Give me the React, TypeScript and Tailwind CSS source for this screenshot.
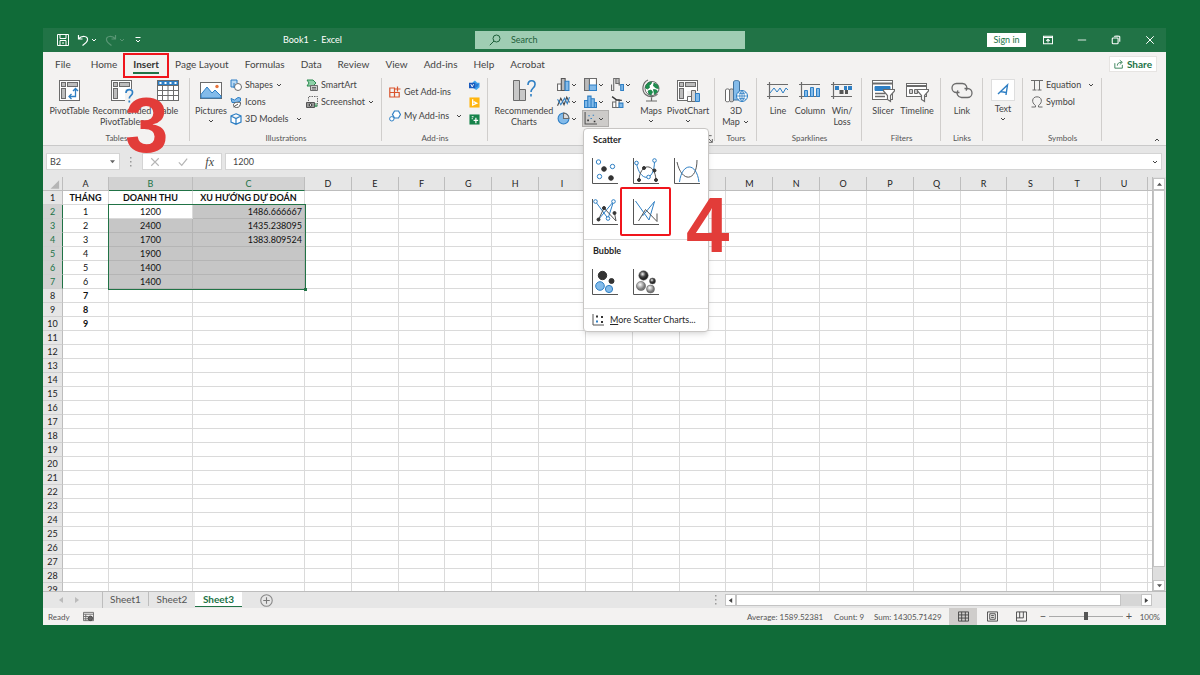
import { ReactNode } from 'react';
import clsx from 'clsx';

const G = '#6b6b6b';
const B = '#2e7fc4';
const LB = '#83bbea';

const Chevron = ({ className }: { className?: string }) => (
  <svg viewBox="0 0 8 8" className={clsx('h-2 w-2 shrink-0', className)} fill="none" stroke="currentColor" strokeWidth="1">
    <path d="M2 3 4 5 6 3" />
  </svg>
);

interface IconProps {
  size?: string;
  box?: string;
  children: ReactNode;
}

const Icon = ({ size = 'h-3 w-3', box = '0 0 12 12', children }: IconProps) => (
  <svg viewBox={box} className={clsx('shrink-0', size)} fill="none" stroke={G} strokeWidth="1" aria-hidden="true">
    {children}
  </svg>
);

const Big = ({ children }: { children: ReactNode }) => (
  <Icon size="h-6 w-6" box="0 0 24 24">
    {children}
  </Icon>
);

/* ---------- large ribbon icons ---------- */

const PivotFrame = () => (
  <>
    <rect x="1.5" y="1.5" width="20" height="20" fill="#fff" />
    <rect x="3.5" y="3.5" width="4" height="4" fill="#bdbdbd" />
    <rect x="9.5" y="3.5" width="10" height="4" fill="#bdbdbd" />
    <rect x="3.5" y="9.5" width="4" height="10" fill="#bdbdbd" />
  </>
);

const PivotTableIcon = () => (
  <Big>
    <PivotFrame />
    <path d="M17.5 10v7.5h-6M15 12l2.5-2.5L20 12M13.5 15 11 17.5l2.5 2.5" stroke={B} strokeWidth="1.3" />
  </Big>
);

const RecommendedPivotIcon = () => (
  <Big>
    <PivotFrame />
    <path d="M15 10h9v14h-9z" fill="#f3f2f1" stroke="none" />
    <path d="M16 14c0-4.5 7-4.5 6.5-.3 0 3-3.2 3-3.2 5.8M19.3 21.5v2" stroke={B} strokeWidth="1.7" />
  </Big>
);

const TableIcon = () => (
  <Big>
    <rect x="1.5" y="1.5" width="21" height="20" fill="#fff" />
    <path d="M2 2h20v4H2z" fill={B} stroke="none" />
    <path d="M3.5 4h2M8.5 4h2M13.5 4h2M18.5 4h2" stroke="#fff" strokeWidth="1.8" />
    <path d="M1.5 6.5h21M1.5 11.5h21M1.5 16.5h21M6.5 6.5v15M12 6.5v15M17.5 6.5v15" />
  </Big>
);

const PicturesIcon = () => (
  <Big>
    <rect x="1.5" y="3.5" width="21" height="16" fill="#fff" />
    <path d="M2 15.5 8 8l5 6 3-3 6 6v2H2z" fill={LB} stroke={B} />
    <circle cx="18" cy="7.5" r="1.7" fill="#e8743b" stroke="none" />
  </Big>
);

const RecommendedChartsIcon = () => (
  <Big>
    <path d="M1.5 1.5h6v20h-6zM7.5 10.5h6v11h-6z" fill="#c8c8c8" />
    <path d="M16 6c0-5.5 7.5-5.5 7-.5 0 3.5-4 3.5-4 7.5M19 15v2.5" stroke={B} strokeWidth="1.6" />
  </Big>
);

const MapsIcon = () => (
  <Big>
    <circle cx="13" cy="9.5" r="7" fill="#fff" />
    <path d="M7 6.5C8 4 11 3 12.5 3l-.5 2-2 1.5.5 2-2 1.5L6.5 9zM15 4l3.5 2 1 3.5-2.5-.5-2.5-2zM9 12l3-1 1.5 2-1.5 3-2-1zM14.5 10.5l3 .5 1 1.5-3 3z" fill="#1e9150" stroke="#187a42" strokeWidth="0.8" />
    <path d="M9 1C3 3.5 2.5 12 6.5 15.5c4 3.5 10 2.5 12-.5M12.500 18.500v3M7 22h11" strokeWidth="1.2" />
  </Big>
);

const PivotChartIcon = () => (
  <Big>
    <PivotFrame />
    <path d="M11 12h13v12H11z" fill="#f3f2f1" stroke="none" />
    <path d="M11.5 17.5h4v5h-4z" fill="#fff" />
    <path d="M15.5 11.5h4v11h-4z" fill="#d5d5d5" />
    <path d="M19.5 14.5h4v8h-4z" fill={LB} stroke={B} />
  </Big>
);

const MapIcon = () => (
  <Big>
    <path d="M1.5 11c0-1.5 4-1.5 4 0v11c0 1-4 1-4 0z" fill="#fff" />
    <path d="M5.5 11c0-1.5 4-1.5 4 0v11c0 1-4 1-4 0z" fill="#c8c8c8" />
    <path d="M9.5 3c0-2 6-2 6 0v18h-6z" fill={LB} stroke="#41719c" />
    <circle cx="18" cy="17" r="5.5" fill="#fff" stroke={B} />
    <path d="M12.5 17h11M18 11.5v11M14 13.5c2 1.500 6 1.500 8 0M14 20.500c2-1.500 6-1.500 8 0M18 11.500c-3 3-3 8 0 11 3-3 3-8 0-11" stroke={B} strokeWidth="0.8" />
  </Big>
);

const SparkFrame = () => <path d="M1 5.5h21M1 17.5h21M3.5 3v17" strokeWidth="1.2" />;

const LineIcon = () => (
  <Big>
    <SparkFrame />
    <path d="m4 14 4-5 3 4 3-4 3 5 3-5 2 2" stroke={B} />
  </Big>
);

const ColumnIcon = () => (
  <Big>
    <SparkFrame />
    <path d="M6.5 11.5h3v6h-3zM12.500 8.500h3v9h-3zM18.500 9.500h3v8h-3z" fill={LB} stroke={B} />
  </Big>
);

const WinLossIcon = () => (
  <Big>
    <SparkFrame />
    <path d="M5 7h4v4H5zM14 7h3v4h-3zM18 7h4v4h-4z" fill={B} stroke="none" />
    <path d="M9.5 11h4v4h-4zM15 11h3v4h-3z" fill="#555" stroke="none" />
  </Big>
);

const Funnel = () => (
  <path transform="translate(12 10)" d="M.5.5h11v1.5L7.500 6.500v6l-3-2v-4L.5 2z" fill="#fff" strokeWidth="1.2" />
);

const SlicerIcon = () => (
  <Big>
    <rect x="1.5" y="1.5" width="20" height="19" fill="#fff" />
    <path d="M1.5 4.5h20" strokeWidth="2" />
    <path d="M4 7.5h15v4H4z" fill={B} stroke={B} />
    <path d="M4 14.5h10M4 17.5h10" strokeWidth="1.5" />
    <Funnel />
  </Big>
);

const TimelineIcon = () => (
  <Big>
    <rect x="1.5" y="4.5" width="20" height="13" fill="#fff" />
    <path d="M1.5 7h20" strokeWidth="2" />
    <path d="M4.5 10.5h3v4h-3zM9.5 10.5h3v4h-3z" fill="#ccc" />
    <Funnel />
  </Big>
);

const LinkIcon = () => (
  <Big>
    <path d="M9.500 13.500H6.500a4.500 4.500 0 1 1 0-9h6a4.500 4.500 0 0 1 3.500 7.200" strokeWidth="1.3" />
    <path d="M14.500 9.500h3a4.500 4.500 0 1 1 0 9h-6a4.500 4.500 0 0 1-3.500-7.200" strokeWidth="1.3" />
  </Big>
);

/* ---------- small ribbon icons ---------- */

const ShapesIcon = () => (
  <Icon>
    <path d="M4 8H1V1h6v3" fill="#b9d9f3" stroke={B} />
    <circle cx="8" cy="8" r="3.5" fill="#fff" />
    <path d="M4 4v5" stroke={B} />
  </Icon>
);

const BirdIcon = () => (
  <Icon>
    <path d="M1 2.5 4.5 4 8 1.5 10.5 2v3L7 6.5H2z" fill={LB} stroke={B} />
    <path d="M3.5 8.5c1-3 5-2 7-2 0 3-1 5-4 5-2 0-3-1-3-3zM3.5 11 8 8" fill="#fff" stroke="#555" />
  </Icon>
);

const CubeIcon = () => (
  <Icon>
    <path d="M6 .8 11 3v6L6 11.3 1 9V3zM1 3l5 2.5L11 3M6 5.5v5.8" fill="#fff" stroke={B} strokeWidth="1.2" />
  </Icon>
);

const SmartArtIcon = () => (
  <Icon>
    <path d="M1 1h6l3 3-3 3H1l2-3z" fill="#8fd0a8" stroke="#2b8a4f" />
    <path d="M4.5 6.5h7v5h-7z" fill="#ccc" />
    <path d="M6 8.5h4M6 10h4" />
  </Icon>
);

const ScreenshotIcon = () => (
  <Icon>
    <path d="M2.5 5V.5h9V10" strokeDasharray="1.5 1" />
    <path d="M.5 6.5h8v5h-8z" fill="#999" stroke="#555" />
    <circle cx="4.5" cy="9" r="1.3" fill="#fff" stroke="#333" />
    <path d="M10 7v4M8.5 10h3" stroke="#2b8a4f" />
  </Icon>
);

const StoreIcon = () => (
  <Icon>
    <path d="M.8 2h4.7v4.5H.8zM.8 6.5h4.7V11H.8zM5.5 6.5h4.7V11H5.5zM8.5.5v5M6 3h5.5" stroke="#d9532c" strokeWidth="1.2" />
  </Icon>
);

const AddinHexIcon = () => (
  <Icon>
    <path d="M5.5 1h4L11.5 4.5 9.5 8h-4L3.5 4.5z" fill="#fff" stroke={B} strokeWidth="1.2" />
    <circle cx="2.8" cy="8.8" r="2.2" fill="#fff" stroke={B} />
  </Icon>
);

const VisioIcon = () => (
  <Icon size="h-[11px] w-[11px]">
    <path d="M4 2.5 6.5.5 9 3h2.5v5L8 11 4 8.5z" fill="#41a5ee" stroke="none" />
    <path d="M0 3h7v6H0z" fill="#185abd" stroke="none" />
    <path d="M7 4h4l-2 4H7z" fill="#2b7cd3" stroke="none" />
    <path d="m2 4.5 1.5 3L5 4.5" stroke="#fff" />
  </Icon>
);

const BingIcon = () => (
  <Icon size="h-[11px] w-[11px]">
    <path d="M.5.5h11v11H.5z" fill="#ffb60f" stroke="none" />
    <path d="M4 2.5v6.2l4.5-2L5 5" stroke="#fff" strokeWidth="1.4" />
  </Icon>
);

const PeopleGraphIcon = () => (
  <Icon size="h-[11px] w-[11px]">
    <path d="M.5.5h11v11H.5z" fill="#16834a" stroke="none" />
    <path d="M3 3h2M3 5h1M7.5 4v6M5 7h5" stroke="#fff" strokeWidth="1.3" />
  </Icon>
);

const chartIconSize = 'h-[13px] w-[13px]';

const ColChartIcon = () => (
  <Icon size={chartIconSize}>
    <path d="M.5 5.5h3.5v6H.5z" fill="#fff" />
    <path d="M4 .5h3.5v11H4z" fill="#bbb" stroke="#555" />
    <path d="M7.5 3h3.5v8.5H7.5z" fill={LB} stroke={B} />
  </Icon>
);

const LineChartIcon = () => (
  <Icon size={chartIconSize}>
    <path d="m.5 10 3-7 3 6L9 2l2.5 5" stroke="#444" />
    <path d="m.5 4 3 5L7 3l2.5 5 2-6" stroke={B} />
  </Icon>
);

const PieChartIcon = () => (
  <Icon size={chartIconSize}>
    <circle cx="6" cy="6" r="5" fill={LB} stroke={B} />
    <path d="M6 6V1a5 5 0 0 1 5 5z" fill="#ddd" />
  </Icon>
);

const TreemapIcon = () => (
  <Icon size={chartIconSize}>
    <path d="M.5.5h11v11H.5z" fill="#fff" />
    <path d="M.5.5H5v11H.5z" fill="#bbb" />
    <path d="M5 6.5h6.500v5H5z" fill={LB} stroke={B} />
  </Icon>
);

const HistogramIcon = () => (
  <Icon size={chartIconSize}>
    <path d="M.5 5h3v6.5h-3zM3.5 1h3v10.5h-3zM6.5 3.5h3v8h-3zM9.5 7h2v4.5h-2z" fill={LB} stroke={B} />
  </Icon>
);

const WaterfallIcon = () => (
  <Icon size={chartIconSize}>
    <path d="M.5 6v5.5h2V6M2.5 6V.5h2M7.500 4v2.500H9" />
    <path d="M4.5.5h3V5h-3z" fill="#bbb" />
    <path d="M9 6h2.5v5.5H9z" fill={LB} stroke={B} />
  </Icon>
);

const ComboIcon = () => (
  <Icon size={chartIconSize}>
    <path d="M1.5 6.5h3v5h-3zM4.5 4.5h3v7h-3z" fill="#fff" />
    <path d="M7.5 7.5h3.5v4H7.500z" fill={LB} stroke={B} />
    <path d="m1 1.5 4 3 5 .5" stroke="#333" strokeWidth="1.2" />
  </Icon>
);

const ScatterIcon = () => (
  <Icon size={chartIconSize}>
    <path d="M1 0v11h11" stroke="#555" />
    <path d="M3 7h1.5v1.5H3zM9 8h1.5v1.5H9z" fill="#333" stroke="none" />
    <path d="M4 3.5h1.3M8 3h1.3M6 6h1.3" stroke={B} />
  </Icon>
);

/* ---------- scatter gallery ---------- */

const Axes = () => <path d="M1.5 1v25.500H27" stroke="#555" />;

const Dots = ({ points, open }: { points: number[][]; open?: boolean }) => (
  <>
    {points.map(([x, y]) => (
      <circle key={`${x}-${y}`} cx={x} cy={y} r={open ? 1.8 : 1.5} fill={open ? '#fff' : '#333'} stroke={open ? B : '#333'} />
    ))}
  </>
);

const scatterTypes = [
  {
    name: 'Scatter',
    art: (
      <>
        <circle cx="7.5" cy="5" r="2.2" stroke={B} />
        <circle cx="21.5" cy="9.5" r="2.2" stroke={B} />
        <circle cx="8.5" cy="19.5" r="2.2" stroke={B} />
        <circle cx="13" cy="12" r="2.3" fill="#333" stroke="#333" />
        <circle cx="20" cy="21" r="2.3" fill="#333" stroke="#333" />
      </>
    ),
  },
  {
    name: 'Scatter with Smooth Lines and Markers',
    art: (
      <>
        <path d="M4.5 6c3 19 18 20 18-2" stroke={B} />
        <path d="M7 23C8 6 23 5 24 23" stroke="#555" />
        <Dots open points={[[4.5, 6], [16.5, 20], [22.5, 3.5]]} />
        <Dots points={[[7, 23], [12, 11], [22.5, 13.5], [24, 23]]} />
      </>
    ),
  },
  {
    name: 'Scatter with Smooth Lines',
    art: (
      <>
        <path d="M4 5c4.5 21 20 20 20-2" stroke="#555" />
        <path d="M6.5 25C9 5 23.500 5 26 25" stroke={B} />
      </>
    ),
  },
  {
    name: 'Scatter with Straight Lines and Markers',
    art: (
      <>
        <path d="M4.5 3.5 17 20.5l5.5-17L7.500 21.500" stroke={B} />
        <path d="m7.500 21.500 5.500-11.500 12 13-1.500-8" stroke="#555" />
        <Dots open points={[[4.5, 3.5], [22.5, 3.5], [17, 20.5]]} />
        <Dots points={[[7.5, 21.5], [13, 10], [23.5, 15]]} />
      </>
    ),
  },
  {
    name: 'Scatter with Straight Lines',
    art: (
      <>
        <path d="m3.5 3 13.500 19 5.500-18.500L10.500 18" stroke={B} />
        <path d="m6.5 23 7-11.500 11.500 12v-8" stroke="#555" />
      </>
    ),
  },
];

const GalleryArt = ({ children }: { children: ReactNode }) => (
  <Icon size="h-7 w-7" box="0 0 28 28">
    {children}
    <Axes />
  </Icon>
);

const ScatterMenu = () => (
  <div className="absolute top-full left-px z-20 mt-px w-[126px] rounded-sm border border-[#c8c6c4] bg-white text-[9px] text-[#262626] shadow-md">
    <h3 className="px-[9px] pt-1 pb-[3px] leading-[14px] font-bold">Scatter</h3>
    <div className="grid grid-cols-[41px_41px_41px]">
      {scatterTypes.map((type, i) => (
        <button key={type.name} aria-label={type.name} className="relative flex h-[41px] items-center justify-center">
          <GalleryArt>{type.art}</GalleryArt>
          {i === 4 && (
            <>
              <span className="absolute -inset-x-[5px] -inset-y-1 rounded-xs border-2 border-[#f0151c]" />
              <span className="absolute -top-[3px] left-[61px] font-['Liberation_Sans',sans-serif] text-[78px] leading-[75px] font-bold text-[#e23c39]">4</span>
            </>
          )}
        </button>
      ))}
    </div>
    <h3 className="mt-[7px] border-t border-[#dcdcdc] px-[9px] pt-1 pb-[3px] leading-[14px] font-bold">Bubble</h3>
    <div className="grid grid-cols-[41px_41px_41px]">
      <button aria-label="Bubble" className="flex h-[41px] items-center justify-center">
        <GalleryArt>
          <circle cx="11.5" cy="7.5" r="4.2" fill="#333" stroke="#333" />
          <circle cx="20.5" cy="13" r="2.5" fill="#333" stroke="#333" />
          <circle cx="9" cy="18" r="4.3" fill={LB} stroke={B} />
          <circle cx="18" cy="21" r="3.6" fill={LB} stroke={B} />
        </GalleryArt>
      </button>
      <button aria-label="3-D Bubble" className="flex h-[41px] items-center justify-center">
        <GalleryArt>
          <defs>
            <radialGradient id="dark" cx="40%" cy="35%">
              <stop offset="0" stopColor="#f5f5f5" />
              <stop offset="0.6" stopColor="#444" />
              <stop offset="1" stopColor="#222" />
            </radialGradient>
            <radialGradient id="light" cx="40%" cy="35%">
              <stop offset="0" stopColor="#fff" />
              <stop offset="1" stopColor="#777" />
            </radialGradient>
          </defs>
          <g stroke="#555" strokeWidth="0.5">
            <circle cx="11.5" cy="7.5" r="4.7" fill="url(#dark)" />
            <circle cx="20.5" cy="13" r="3" fill="url(#dark)" />
            <circle cx="9" cy="18" r="4.6" fill="url(#light)" />
            <circle cx="18.5" cy="21" r="4" fill="url(#light)" />
          </g>
        </GalleryArt>
      </button>
    </div>
    <button className="mt-[6px] flex h-[23px] w-full items-center gap-[6px] border-t border-[#dcdcdc] px-2">
      <Icon>
        <path d="M1 0v11h11" stroke="#555" />
        <path d="M4 1.5h2v2H4zM9 2h2v2H9zM9 7h2v2H9z" fill="#333" stroke="none" />
        <path d="M4 6.5h2v2H4z" fill={B} stroke="none" />
      </Icon>
      <span className="whitespace-nowrap"><u>M</u>ore Scatter Charts...</span>
    </button>
  </div>
);

/* ---------- ribbon building blocks ---------- */

interface GroupProps {
  label: string;
  width: string;
  className?: string;
  children: ReactNode;
}

const Group = ({ label, width, className, children }: GroupProps) => (
  <section className={clsx('relative flex shrink-0 flex-col', width)}>
    <div className={clsx('flex flex-1', className)}>{children}</div>
    <h2 className="h-3 text-center text-[8px] leading-[10px] text-[#555]">{label}</h2>
    <span className="absolute top-0.5 right-0 bottom-1 w-px bg-[#d0cecc]" />
  </section>
);

interface BigButtonProps {
  icon: ReactNode;
  lines: string[];
  width: string;
  menu?: boolean;
}

const BigButton = ({ icon, lines, width, menu }: BigButtonProps) => (
  <button className={clsx('flex shrink-0 flex-col items-center pt-[3px] leading-[11px] whitespace-nowrap', width)}>
    {icon}
    <span className="mt-0.5">{lines[0]}</span>
    {lines[1] && (
      <span className="flex items-center gap-0.5">
        {lines[1]}
        {menu && <Chevron />}
      </span>
    )}
    {menu && !lines[1] && <Chevron className="mt-px" />}
  </button>
);

interface SmallButtonProps {
  icon: ReactNode;
  label: string;
  menu?: boolean;
  wide?: boolean;
}

const SmallButton = ({ icon, label, menu, wide }: SmallButtonProps) => (
  <button className="flex h-[17px] items-center gap-[3px] whitespace-nowrap">
    {icon}
    <span>{label}</span>
    {menu && <Chevron className={wide ? 'ml-[3px]' : '-ml-px'} />}
  </button>
);

const chartButtons = [
  { name: 'Column', icon: <ColChartIcon /> },
  { name: 'Hierarchy', icon: <TreemapIcon /> },
  { name: 'Waterfall', icon: <WaterfallIcon /> },
  { name: 'Line', icon: <LineChartIcon /> },
  { name: 'Statistic', icon: <HistogramIcon /> },
  { name: 'Combo', icon: <ComboIcon /> },
  { name: 'Pie', icon: <PieChartIcon /> },
];

const Ribbon = () => (
  <div className="flex h-[69px] text-[9px] text-[#444]">
    <Group label="Tables" width="w-[147px]" className="pl-[5px]">
      <BigButton icon={<PivotTableIcon />} lines={['PivotTable']} width="w-[43px]" />
      <BigButton icon={<RecommendedPivotIcon />} lines={['Recommended', 'PivotTables']} width="w-[62px]" />
      <BigButton icon={<TableIcon />} lines={['Table']} width="w-[30px]" />
      <span className="absolute top-[12px] left-[82px] z-10 font-['Liberation_Sans',sans-serif] text-[78px] leading-[75px] font-bold text-[#e23c39]">3</span>
    </Group>
    <Group label="Illustrations" width="w-[192px]" className="gap-px pl-[3px]">
      <BigButton icon={<PicturesIcon />} lines={['Pictures']} width="w-[36px]" menu />
      <div className="w-[75px]">
        <SmallButton icon={<ShapesIcon />} label="Shapes" menu />
        <SmallButton icon={<BirdIcon />} label="Icons" />
        <SmallButton icon={<CubeIcon />} label="3D Models" menu wide />
      </div>
      <div>
        <SmallButton icon={<SmartArtIcon />} label="SmartArt" />
        <SmallButton icon={<ScreenshotIcon />} label="Screenshot" menu />
      </div>
    </Group>
    <Group label="Add-ins" width="w-[106px]" className="justify-between pr-2 pl-[7px]">
      <div className="flex flex-col gap-[7px] pt-[7px]">
        <SmallButton icon={<StoreIcon />} label="Get Add-ins" />
        <SmallButton icon={<AddinHexIcon />} label="My Add-ins" menu wide />
      </div>
      <div>
        {[<VisioIcon />, <BingIcon />, <PeopleGraphIcon />].map((icon, i) => (
          <button key={i} aria-label="Add-in" className="flex h-[17px] items-center pt-0.5">{icon}</button>
        ))}
      </div>
    </Group>
    <Group label="" width="w-[227px]" className="pl-[5px]">
      <BigButton icon={<RecommendedChartsIcon />} lines={['Recommended', 'Charts']} width="w-[62px]" />
      <div className="grid w-[81px] auto-rows-[17px] grid-cols-3">
        {chartButtons.map((chart) => (
          <button key={chart.name} aria-label={chart.name} className="flex items-center pl-0.5">
            {chart.icon}
            <Chevron />
          </button>
        ))}
        <div className="relative">
          <button aria-label="Scatter" className="flex h-[17px] w-full items-center border border-[#b0aeac] bg-[#cdcbc9] pl-px">
            <ScatterIcon />
            <Chevron />
          </button>
          <ScatterMenu />
        </div>
      </div>
      <BigButton icon={<MapsIcon />} lines={['Maps']} width="w-[30px]" menu />
      <BigButton icon={<PivotChartIcon />} lines={['PivotChart']} width="w-[44px]" menu />
      <button aria-label="Chart options" className="absolute right-0.5 bottom-0.5">
        <Icon size="h-2 w-2">
          <path d="M1 10V1h9M5 5l6 6M11 6v5H6" strokeWidth="1.5" />
        </Icon>
      </button>
    </Group>
    <Group label="Tours" width="w-[42px]" className="justify-center">
      <BigButton icon={<MapIcon />} lines={['3D', 'Map']} width="w-[36px]" menu />
    </Group>
    <Group label="Sparklines" width="w-[105px]" className="pl-[5px]">
      <BigButton icon={<LineIcon />} lines={['Line']} width="w-[32px]" />
      <BigButton icon={<ColumnIcon />} lines={['Column']} width="w-[32px]" />
      <BigButton icon={<WinLossIcon />} lines={['Win/', 'Loss']} width="w-[32px]" />
    </Group>
    <Group label="Filters" width="w-[79px]" className="pl-[5px]">
      <BigButton icon={<SlicerIcon />} lines={['Slicer']} width="w-[32px]" />
      <BigButton icon={<TimelineIcon />} lines={['Timeline']} width="w-[36px]" />
    </Group>
    <Group label="Links" width="w-[42px]" className="justify-center">
      <BigButton icon={<LinkIcon />} lines={['Link']} width="w-[36px]" />
    </Group>
    <Group label="" width="w-[40px]" className="justify-center">
      <BigButton
        icon={
          <span className="flex h-[22px] w-6 items-center justify-center border border-[#dedede] bg-white">
            <Icon size="h-4 w-4" box="0 0 16 16">
              <path d="M3 12 12.5 3 11 13M5.5 9.5 11 10.5" stroke={B} strokeWidth="1.4" />
            </Icon>
          </span>
        }
        lines={['Text']}
        width="w-[32px]"
        menu
      />
    </Group>
    <Group label="Symbols" width="w-[79px]" className="flex-col items-start pl-2">
      <SmallButton
        icon={
          <Icon>
            <path d="M0 1.5h12M3.5 1.5v9.5M1.5 11h4M8.5 1.5v9.5M6.5 11h4" />
          </Icon>
        }
        label="Equation"
        menu
        wide
      />
      <SmallButton
        icon={
          <Icon>
            <path d="M.5 11h4V9.5C0 6.5 1 .8 6 .8s6 5.7 1.500 8.700V11h4" />
          </Icon>
        }
        label="Symbol"
      />
    </Group>
    <div className="flex flex-1 items-end justify-end pr-[5px] pb-px">
      <button aria-label="Collapse the Ribbon">
        <Chevron className="rotate-180" />
      </button>
    </div>
  </div>
);

/* ---------- title bar and tabs ---------- */

const TitleBar = () => (
  <header className="flex h-6 items-center bg-[#217346] text-[9px] text-white">
    <div className="flex w-[240px] items-center pl-[14px]">
      <button aria-label="Save">
        <Icon size="h-3 w-3">
          <path d="M.5.5h11v11H.5zM3 .5v4h6v-4M3 11.5v-5h6v5M5 9h2" stroke="#fff" />
        </Icon>
      </button>
      <button aria-label="Undo" className="ml-2 flex items-center gap-px">
        <Icon>
          <path d="M1.5 1v4h4M1.5 5C5 1 11 2 10.5 6c-.3 2.5-3 4-5 5.5" stroke="#fff" strokeWidth="1.2" />
        </Icon>
        <Chevron />
      </button>
      <button aria-label="Redo" className="ml-[7px] flex items-center gap-px opacity-25">
        <Icon>
          <path d="M10.5 1v4h-4M10.5 5C7 1 1 2 1.5 6c.3 2.5 3 4 5 5.500" stroke="#fff" strokeWidth="1.2" />
        </Icon>
        <Chevron />
      </button>
      <button aria-label="Customize" className="ml-2">
        <Icon size="h-2 w-2" box="0 0 8 8">
          <path d="M1.5 1.5h5M2 4l2 2 2-2" stroke="#fff" />
        </Icon>
      </button>
    </div>
    <h1 className="w-[192px] whitespace-pre">Book1  -  Excel</h1>
    <label className="flex h-[18px] w-[270px] items-center gap-[10px] bg-[#9fcdb3] pl-[14px] text-[#1e5f3a]">
      <Icon>
        <circle cx="7.5" cy="4.5" r="3.5" stroke="#1e5f3a" />
        <path d="M5 7 .8 11.2" stroke="#1e5f3a" />
      </Icon>
      <input aria-label="Search" placeholder="Search" className="w-full bg-transparent outline-none placeholder:text-[#1e5f3a]" />
    </label>
    <div className="ml-auto flex items-center pr-[11px]">
      <button className="h-[14px] w-[39px] bg-white leading-[14px] text-[#217346]">Sign in</button>
      <button aria-label="Ribbon Display Options" className="ml-[17px]">
        <Icon size="h-[10px] w-[10px]">
          <path d="M.5 1.5h11v9H.5zM.5 3h11M6 9V5M4 7l2-2 2 2" stroke="#fff" strokeWidth="1.3" />
        </Icon>
      </button>
      <button aria-label="Minimize" className="ml-6">
        <Icon size="h-[10px] w-[10px]">
          <path d="M1 6h10" stroke="#fff" />
        </Icon>
      </button>
      <button aria-label="Restore" className="ml-6">
        <Icon size="h-[10px] w-[10px]">
          <rect x="1.5" y="3.5" width="7" height="7" rx="1" stroke="#fff" strokeWidth="1.3" />
          <path d="M4 2c0-1 6.5-1 6.5 0v6" stroke="#fff" strokeWidth="1.3" />
        </Icon>
      </button>
      <button aria-label="Close" className="ml-6">
        <Icon size="h-[10px] w-[10px]">
          <path d="m1.5 1.5 9 9M10.5 1.5l-9 9" stroke="#fff" strokeWidth="1.2" />
        </Icon>
      </button>
    </div>
  </header>
);

const tabs = ['File', 'Home', 'Insert', 'Page Layout', 'Formulas', 'Data', 'Review', 'View', 'Add-ins', 'Help', 'Acrobat'];

const TabRow = () => (
  <nav className="flex h-6 items-center gap-4 pr-[9px] pl-3 text-[10px] text-[#444]">
    {tabs.map((tab) => (
      <button key={tab} className={clsx('relative leading-4 whitespace-nowrap', tab === 'File' && 'mr-1', tab === 'Insert' && 'font-bold text-[#333]')}>
        {tab}
        {tab === 'Insert' && (
          <>
            <span className="absolute inset-x-0 -bottom-0.5 h-0.5 bg-[#217346]" />
            <span className="absolute -inset-x-[10px] -top-[3px] -bottom-[6px] z-10 border-2 border-[#f0151c]" />
          </>
        )}
      </button>
    ))}
    <button className="ml-auto flex h-4 items-center justify-center gap-[3px] border border-[#e6e4e2] bg-white px-1 font-bold text-[#217346]">
      <Icon size="h-[10px] w-[10px]">
        <path d="M1 5v6h9V7M4 8c0-3 2-4 5-4M7 1.5 10 4 7 6.5" stroke="#217346" />
      </Icon>
      Share
    </button>
  </nav>
);

const FormulaBar = () => (
  <div className="flex h-8 items-center gap-[3px] border-t border-[#c9c9c9] bg-[#e6e6e6] pr-1 pl-[3px] text-[9px] text-[#444]">
    <div className="flex h-[17px] w-[74px] items-center border border-[#d4d4d4] bg-white pr-1 pl-[3px]">
      <input aria-label="Name Box" defaultValue="B2" className="w-full outline-none" />
      <svg viewBox="0 0 6 6" className="h-[5px] w-[5px] shrink-0 fill-[#666]">
        <path d="M0 1.5h6L3 5z" />
      </svg>
    </div>
    <svg viewBox="0 0 16 10" className="h-[10px] w-4 shrink-0 fill-[#999]">
      <path d="M7 0h1.5v1.5H7zM7 4h1.5v1.5H7zM7 8h1.5v1.5H7z" />
    </svg>
    <div className="flex h-[17px] w-[80px] items-center justify-between border border-[#d4d4d4] bg-white px-[7px]">
      <button aria-label="Cancel">
        <Icon size="h-[10px] w-[10px]">
          <path d="m1.5 1.5 9 9M10.5 1.5l-9 9" stroke="#b5b5b5" strokeWidth="1.3" />
        </Icon>
      </button>
      <button aria-label="Enter">
        <Icon size="h-[10px] w-[10px]">
          <path d="m1 6.5 3.5 3.5L11 2" stroke="#b5b5b5" strokeWidth="1.5" />
        </Icon>
      </button>
      <button className="font-['Liberation_Serif',serif] text-[12px] leading-3 italic">fx</button>
    </div>
    <div className="flex h-[17px] flex-1 items-center border border-[#d4d4d4] bg-white px-[7px]">
      <input aria-label="Formula Bar" defaultValue="1200" className="w-full outline-none" />
      <Chevron className="-mr-[5px]" />
    </div>
  </div>
);

/* ---------- sheet ---------- */

const columns = 'ABCDEFGHIJKLMNOPQRSTU'.split('');

const data: Record<number, string[]> = {
  1: ['THÁNG', 'DOANH THU', 'XU HƯỚNG DỰ ĐOÁN'],
  2: ['1', '1200', '1486.666667'],
  3: ['2', '2400', '1435.238095'],
  4: ['3', '1700', '1383.809524'],
  5: ['4', '1900'],
  6: ['5', '1400'],
  7: ['6', '1400'],
  8: ['7'],
  9: ['8'],
  10: ['9'],
};

const isSelected = (row: number, col: number) => row >= 2 && row <= 7 && (col === 1 || col === 2);

const Sheet = () => (
  <div className="flex min-h-0 flex-1 bg-[#e6e6e6]">
    <div className="min-w-0 flex-1 overflow-hidden">
      <table className="w-full table-fixed border-separate border-spacing-0 text-[9px] text-[#111]">
        <colgroup>
          <col className="w-5" />
          <col className="w-[46px]" />
          <col className="w-[84px]" />
          <col className="w-[112px]" />
          {columns.slice(3).map((c) => (
            <col key={c} />
          ))}
          <col className="w-1" />
        </colgroup>
        <thead>
          <tr className="h-[14px]">
            <th className="border-r border-b border-[#bdbdbd] bg-[#e6e6e6] p-0">
              <svg viewBox="0 0 20 13" className="h-[13px] w-[19px] fill-[#b5b5b5]">
                <path d="M17 3v9H8z" />
              </svg>
            </th>
            {columns.map((c, i) => (
              <th
                key={c}
                className={clsx(
                  'h-[14px] border-r border-b p-0 leading-[13px] font-normal',
                  i === 1 || i === 2 ? 'border-r-[#bdbdbd] border-b-[#217346] bg-[#d2d2d2] text-[#217346]' : 'border-[#bdbdbd] bg-[#e6e6e6] text-[#222]',
                )}
              >
                {c}
              </th>
            ))}
            <th className="border-b border-[#bdbdbd] bg-[#e6e6e6] p-0" />
          </tr>
        </thead>
        <tbody>
          {Array.from({ length: 29 }, (_, i) => i + 1).map((row) => (
            <tr key={row} className="h-[14px]">
              <th
                className={clsx(
                  'h-[14px] border-r border-b border-b-[#cfcfcf] p-0 pt-px leading-3 font-normal',
                  row >= 2 && row <= 7 ? 'border-r-[#217346] bg-[#d2d2d2] text-[#217346]' : 'border-r-[#bdbdbd] bg-[#e6e6e6] text-[#222]',
                )}
              >
                {row}
              </th>
              {columns.map((c, col) => (
                <td
                  key={c}
                  className={clsx(
                    'relative border-r border-b p-0 pt-px leading-3 whitespace-nowrap',
                    col === 2 && row > 1 ? 'pr-0.5 text-right' : 'text-center',
                    (row === 1 || row > 7) && 'font-bold',
                    isSelected(row, col) && !(row === 2 && col === 1) ? 'border-[#b5b5b5] bg-[#c6c6c6]' : 'border-[#dadada] bg-white',
                  )}
                >
                  {data[row]?.[col]}
                  {row === 2 && col === 1 && (
                    <span className="absolute -top-px -left-px z-10 h-[86px] w-[198px] border border-[#217346]">
                      <span className="absolute -right-0.5 -bottom-0.5 h-[3px] w-[3px] bg-[#217346]" />
                    </span>
                  )}
                </td>
              ))}
              <td className="border-b border-[#dadada] bg-white p-0" />
            </tr>
          ))}
        </tbody>
      </table>
    </div>
    <div className="flex w-[14px] flex-col border-l border-[#bdbdbd] bg-[#dedede] pt-px pr-px">
      <button aria-label="Scroll up" className="flex h-3 items-center justify-center border border-[#c4c4c4] bg-white">
        <svg viewBox="0 0 6 6" className="h-[5px] w-[5px] fill-[#555]"><path d="M0 4.5h6L3 1z" /></svg>
      </button>
      <div className="h-[377px] border border-[#c4c4c4] bg-white" />
      <button aria-label="Scroll down" className="mt-auto flex h-[11px] items-center justify-center border border-[#c4c4c4] bg-white">
        <svg viewBox="0 0 6 6" className="h-[5px] w-[5px] fill-[#555]"><path d="M0 1.5h6L3 5z" /></svg>
      </button>
    </div>
  </div>
);

const SheetTabs = () => (
  <div className="flex h-[17px] items-start border-t border-[#bdbdbd] bg-[#e6e6e6] text-[10px] text-[#555]">
    <div className="flex h-4 w-[60px] items-center gap-[10px] border-r border-[#bdbdbd] pl-[15px]">
      <svg viewBox="0 0 6 6" className="h-[6px] w-[6px] fill-[#bbb]"><path d="M5 0v6L1 3z" /></svg>
      <svg viewBox="0 0 6 6" className="h-[6px] w-[6px] fill-[#bbb]"><path d="M1 0v6l4-3z" /></svg>
    </div>
    <button className="h-[14px] w-[46px] border-r border-[#bdbdbd] leading-3">Sheet1</button>
    <button className="h-[14px] w-[46px] leading-3">Sheet2</button>
    <button className="h-[15px] w-[47px] border-b border-[#217346] bg-white leading-3 font-bold text-[#217346]">Sheet3</button>
    <button aria-label="New sheet" className="mt-0.5 ml-[18px]">
      <Icon size="h-[13px] w-[13px]">
        <circle cx="6" cy="6" r="5.3" stroke="#888" />
        <path d="M6 3v6M3 6h6" stroke="#777" />
      </Icon>
    </button>
    <div className="ml-auto flex h-4 items-center pr-[14px]">
      <svg viewBox="0 0 3 10" className="mr-2 h-[10px] w-[3px] fill-[#999]">
        <path d="M1 0h1.5v1.5H1zM1 4h1.5v1.5H1zM1 8h1.5v1.5H1z" />
      </svg>
      <button aria-label="Scroll left" className="flex h-3 w-[11px] items-center justify-center border border-[#c4c4c4] bg-white">
        <svg viewBox="0 0 6 6" className="h-[5px] w-[5px] fill-[#444]"><path d="M5 0v6L1 3z" /></svg>
      </button>
      <div className="h-3 w-[385px] border border-[#c4c4c4] bg-white" />
      <div className="h-3 w-5 bg-[#d6d6d6]" />
      <button aria-label="Scroll right" className="flex h-3 w-[11px] items-center justify-center border border-[#c4c4c4] bg-white">
        <svg viewBox="0 0 6 6" className="h-[5px] w-[5px] fill-[#444]"><path d="M1 0v6l4-3z" /></svg>
      </button>
    </div>
  </div>
);

const StatusBar = () => (
  <footer className="flex h-[17px] items-center bg-[#f3f2f1] text-[8px] text-[#555]">
    <span className="w-[40px] pl-[5px]">Ready</span>
    <Icon size="h-[11px] w-[11px]">
      <path d="M.5 1.5h11v9H.5zM.5 3.5h11M3 3.5v7M.5 6h5M.5 8.5h5" />
      <circle cx="8" cy="8" r="2.5" fill="#666" stroke="#444" />
    </Icon>
    <div className="ml-auto flex h-full items-center">
      <span className="w-[87px]">Average: 1589.52381</span>
      <span className="w-[40px]">Count: 9</span>
      <span className="w-[75px]">Sum: 14305.71429</span>
      <button aria-label="Normal" className="flex h-full w-7 items-center justify-center bg-[#cfcdcb]">
        <Icon size="h-[11px] w-[11px]">
          <path d="M.5 1h11v10H.5zM.5 4.3h11M.5 7.7h11M4 1v10M8 1v10" stroke="#444" />
        </Icon>
      </button>
      <button aria-label="Page Layout" className="flex h-full w-[30px] items-center justify-center">
        <Icon size="h-[11px] w-[11px]">
          <path d="M.5 1h11v10H.5zM3 3h6v6H3zM4.5 5h3M4.5 7h3" stroke="#444" />
        </Icon>
      </button>
      <button aria-label="Page Break Preview" className="flex h-full w-7 items-center justify-center">
        <Icon size="h-[11px] w-[11px]">
          <path d="M.5 1h11v10H.5zM4 1v6.5M8 1v6.5M.5 7.5H8" stroke="#444" />
        </Icon>
      </button>
      <button aria-label="Zoom out" className="ml-1 w-2 text-[11px]">−</button>
      <input
        type="range"
        aria-label="Zoom"
        defaultValue={50}
        className="mx-0.5 h-2 w-[74px] appearance-none bg-transparent [&::-webkit-slider-runnable-track]:h-px [&::-webkit-slider-runnable-track]:bg-[#aaa] [&::-webkit-slider-thumb]:-mt-1 [&::-webkit-slider-thumb]:h-2 [&::-webkit-slider-thumb]:w-1 [&::-webkit-slider-thumb]:appearance-none [&::-webkit-slider-thumb]:bg-[#555]"
      />
      <button aria-label="Zoom in" className="w-2 text-[11px]">+</button>
      <span className="w-[33px] pr-[6px] text-right">100%</span>
    </div>
  </footer>
);

export default function App() {
  return (
    <div className="flex h-screen flex-col bg-[#106b38] pt-7 pr-[34px] pb-[50px] pl-[43px] font-['Lato','Noto_Sans',sans-serif]">
      <main className="flex min-h-0 flex-1 flex-col bg-[#f3f2f1]">
        <TitleBar />
        <TabRow />
        <Ribbon />
        <FormulaBar />
        <Sheet />
        <SheetTabs />
        <StatusBar />
      </main>
    </div>
  );
}
